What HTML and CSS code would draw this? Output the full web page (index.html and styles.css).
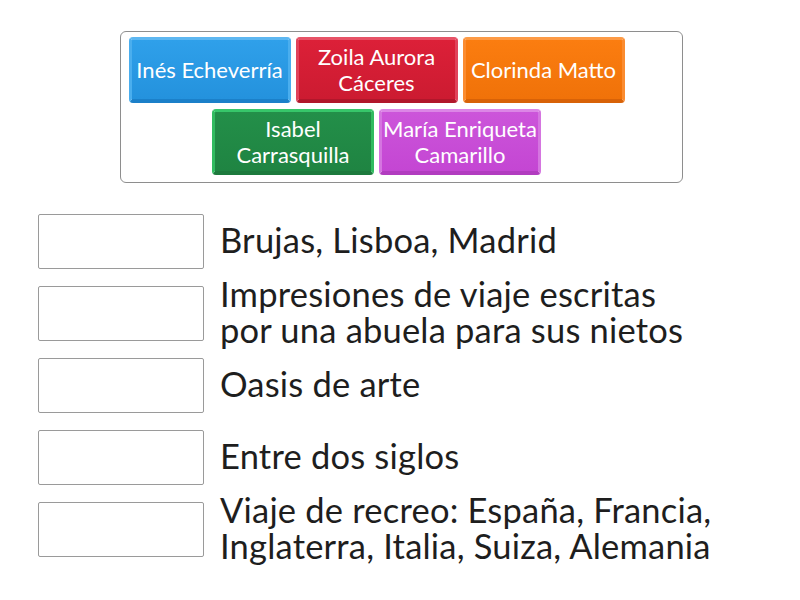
FILE: index.html
```html
<!DOCTYPE html>
<html lang="es">
<head>
<meta charset="utf-8">
<title>Relacionar</title>
<link rel="stylesheet" href="styles.css">
</head>
<body>
<div class="page">
  <div class="bank">
    <div class="tiles">
      <div class="tile blue">Inés Echeverría</div>
      <div class="tile red">Zoila Aurora Cáceres</div>
      <div class="tile orange">Clorinda Matto</div>
      <div class="tile green">Isabel Carrasquilla</div>
      <div class="tile purple">María Enriqueta Camarillo</div>
    </div>
  </div>
  <div class="matches">
    <div class="row"><div class="slot"></div><div class="label">Brujas, Lisboa, Madrid</div></div>
    <div class="row"><div class="slot"></div><div class="label">Impresiones de viaje escritas<br>por una abuela para sus nietos</div></div>
    <div class="row"><div class="slot"></div><div class="label">Oasis de arte</div></div>
    <div class="row"><div class="slot"></div><div class="label">Entre dos siglos</div></div>
    <div class="row"><div class="slot"></div><div class="label">Viaje de recreo: España, Francia,<br>Inglaterra, Italia, Suiza, Alemania</div></div>
  </div>
</div>
</body>
</html>
```

FILE: styles.css
```css
html, body {
  margin: 0;
  padding: 0;
  background: #ffffff;
}
body {
  font-family: Lato, "Open Sans", sans-serif;
  color: #1e1e1e;
}
.page {
  width: 800px;
  height: 600px;
  padding-top: 31px;
  box-sizing: border-box;
}
.bank {
  margin-left: 120px;
  width: 563px;
  box-sizing: border-box;
  border: 1px solid #8e8e8e;
  border-radius: 6px;
  padding: 5px 0 7px 7px;
}
.tiles {
  width: 497px;
  display: flex;
  flex-wrap: wrap;
  justify-content: center;
  column-gap: 5px;
  row-gap: 6px;
}
.tile {
  width: 162px;
  height: 66px;
  box-sizing: border-box;
  display: flex;
  align-items: center;
  justify-content: center;
  text-align: center;
  color: #ffffff;
  font-size: 22px;
  line-height: 26px;
  border-radius: 4px;
  border: 3px solid;
  border-bottom-width: 4px;
  padding: 0;
}
.blue {
  background: linear-gradient(#2fa0ea, #2492dd);
  border-color: #5db7f1 #4aaeee #1b80c9 #4aaeee;
}
.red {
  background: linear-gradient(#dc2038, #cc1b31);
  border-color: #e75266 #e1425a #b1172b #e1425a;
}
.orange {
  background: linear-gradient(#fb7d10, #f07209);
  border-color: #fd9a45 #fb8c30 #d86207 #fb8c30;
}
.green {
  background: linear-gradient(#238f49, #1f8442);
  border-color: #37c66a #31bb60 #1d7a3d #31bb60;
}
.purple {
  background: linear-gradient(#cc55da, #c446d3);
  border-color: #dc86e6 #d575e0 #b23cc0 #d575e0;
}
.matches {
  margin-top: 31px;
  margin-left: 38px;
  display: flex;
  flex-direction: column;
  row-gap: 17px;
}
.row {
  display: flex;
  align-items: center;
  height: 55px;
  column-gap: 16px;
}
.slot {
  width: 166px;
  height: 55px;
  box-sizing: border-box;
  border: 1px solid #9a9a9a;
  border-radius: 2px;
  background: #ffffff;
  flex: none;
}
.label {
  font-size: 34.5px;
  line-height: 36px;
  letter-spacing: 0.2px;
  margin-bottom: 4px;
  white-space: nowrap;
}
```
